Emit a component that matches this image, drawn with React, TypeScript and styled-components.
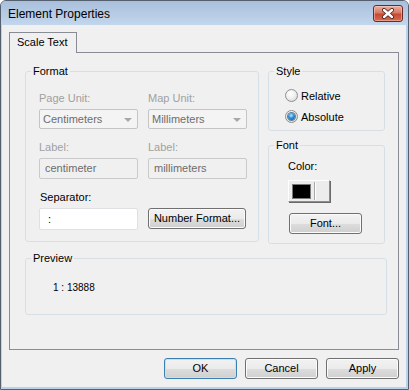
import React from "react";
import styled, { createGlobalStyle } from "styled-components";

const GlobalStyle = createGlobalStyle`
  html, body { margin: 0; padding: 0; background: #ffffff; }
  body {
    font-family: "Liberation Sans", Arial, sans-serif;
    font-size: 11px;
    color: #000;
  }
  * { box-sizing: border-box; }
`;

const Window = styled.div`
  width: 409px;
  height: 390px;
  border: 1px solid #55606f;
  border-radius: 6px 6px 0 0;
  background: #b9d1ea;
  display: flex;
  flex-direction: column;
  overflow: hidden;
`;

const TitleBar = styled.div`
  height: 24px;
  flex: none;
  display: flex;
  align-items: flex-start;
  justify-content: space-between;
  padding: 0 5px 0 7px;
  background: linear-gradient(#a9bfdb, #c2d6ec);
`;

const Title = styled.div`
  font-size: 12px;
  line-height: 14px;
  padding-top: 6px;
  color: #000;
`;

const CloseButton = styled.div`
  margin-top: 4px;
  width: 30px;
  height: 17px;
  border: 1px solid #6d2a22;
  border-radius: 3px;
  background: linear-gradient(#eab0a2 0%, #d97862 45%, #c54a32 55%, #d56c52 100%);
  box-shadow: inset 0 0 0 1px rgba(255, 220, 210, 0.45);
  display: flex;
  align-items: center;
  justify-content: center;
`;

const Client = styled.div`
  flex: 1;
  margin: 0 2px 2px 1px;
  background: #f0f0f0;
  padding: 7px 7px 0 7px;
  display: flex;
  flex-direction: column;
`;

const TabStrip = styled.div`
  display: flex;
  flex: none;
  height: 21px;
  margin-bottom: -1px;
  position: relative;
  z-index: 1;
`;

const Tab = styled.div`
  width: 68px;
  height: 21px;
  border: 1px solid #898c95;
  border-bottom: none;
  background: #f0f0f0;
  padding-left: 7px;
  line-height: 18px;
`;

const Panel = styled.div`
  flex: 1;
  border: 1px solid #898c95;
  background: #f0f0f0;
  padding: 12px 0 0 15px;
  display: flex;
  flex-direction: column;
`;

const TopRow = styled.div`
  display: flex;
  align-items: flex-start;
  gap: 9px;
`;

const RightColumn = styled.div`
  display: flex;
  flex-direction: column;
  gap: 8px;
`;

const Group = styled.fieldset<{ $w: number }>`
  margin: 0;
  min-width: 0;
  width: ${(p) => p.$w}px;
  border: 1px solid #d5dfe5;
  border-radius: 3px;
  padding: 0 0 0 5px;
`;

const Legend = styled.legend`
  padding: 0 2px;
  line-height: 13px;
  font-size: 11px;
  color: #000;
`;

const FormatGrid = styled.div`
  display: grid;
  grid-template-columns: 99px 99px;
  column-gap: 10px;
  row-gap: 12px;
  padding: 14px 0 11px 8px;
`;

const Field = styled.div`
  display: flex;
  flex-direction: column;
  gap: 4px;
`;

const FieldLabel = styled.div<{ $disabled?: boolean }>`
  line-height: 13px;
  color: ${(p) => (p.$disabled ? "#a0a0a0" : "#000")};
  padding-left: ${(p) => (p.$disabled ? 0 : 1)}px;
`;

const Combo = styled.div`
  height: 20px;
  border: 1px solid #c5c5c5;
  border-radius: 2px;
  background: #f4f4f4;
  display: flex;
  align-items: center;
  justify-content: space-between;
  padding: 0 5px 0 3px;
  color: #6d6d6d;
`;

const ComboArrow = styled.span`
  width: 0;
  height: 0;
  border-left: 4px solid transparent;
  border-right: 4px solid transparent;
  border-top: 4px solid #a8a8a8;
  margin-top: 1px;
`;

const TextBox = styled.div<{ $enabled?: boolean }>`
  height: ${(p) => (p.$enabled ? 22 : 21)}px;
  border: 1px solid ${(p) => (p.$enabled ? "#e0e0e4" : "#cacaca")};
  border-radius: 2px;
  background: ${(p) => (p.$enabled ? "#ffffff" : "#f0f0f0")};
  padding-left: ${(p) => (p.$enabled ? 8 : 5)}px;
  line-height: ${(p) => (p.$enabled ? 20 : 19)}px;
  color: ${(p) => (p.$enabled ? "#000" : "#6d6d6d")};
`;

const PushButton = styled.div<{ $w: number; $default?: boolean }>`
  width: ${(p) => p.$w}px;
  height: 21px;
  flex: none;
  border: 1px solid ${(p) => (p.$default ? "#3c7fb1" : "#707070")};
  border-radius: 3px;
  background: linear-gradient(#f2f2f2 0%, #ebebeb 50%, #dddddd 51%, #cfcfcf 100%);
  box-shadow: inset 0 0 0 1px ${(p) => (p.$default ? "#bfe4f8" : "#fbfbfb")};
  display: flex;
  align-items: center;
  justify-content: center;
  line-height: 13px;
  color: #000;
`;

const FieldButton = styled(PushButton)`
  align-self: end;
  margin-bottom: 1px;
`;

const StyleBody = styled.div`
  padding: 7px 0 3px 11px;
`;

const RadioRow = styled.div`
  display: flex;
  align-items: center;
  gap: 3px;
  height: 21px;
`;

const Radio = styled.span`
  width: 13px;
  height: 13px;
  border-radius: 50%;
  border: 1px solid #8e8f8f;
  background: radial-gradient(circle at 40% 35%, #ffffff 0%, #f0f0f0 45%, #cfcfcf 100%);
  display: flex;
  align-items: center;
  justify-content: center;
  flex: none;
`;

const RadioDot = styled.span`
  width: 7px;
  height: 7px;
  border-radius: 50%;
  background: radial-gradient(circle at 45% 35%, #b6e6ff 0%, #2f8fd6 45%, #0b4580 100%);
  box-shadow: 0 0 0 1px #5d7f9c;
`;

const FontBody = styled.div`
  padding: 8px 0 9px 13px;
  display: flex;
  flex-direction: column;
  align-items: flex-start;
`;

const ColorButton = styled.div`
  width: 42px;
  height: 22px;
  margin: 7px 0 0 1px;
  border: 1px solid;
  border-color: #ffffff #8c8c8c #8c8c8c #ffffff;
  box-shadow: 1px 1px 0 #6a6a6a;
  background: #ececec;
  display: flex;
  align-items: center;
  padding-left: 3px;
`;

const Swatch = styled.span`
  width: 19px;
  height: 15px;
  background: #000;
  border: 1px solid #7a7a7a;
`;

const Divider = styled.span`
  width: 2px;
  height: 18px;
  margin-left: 3px;
  border-left: 1px solid #a8a8a8;
  border-right: 1px solid #ffffff;
`;

const FontButton = styled(PushButton)`
  margin: 11px 0 0 2px;
`;

const PreviewGroup = styled(Group)`
  margin-top: 8px;
`;

const PreviewBody = styled.div`
  padding: 16px 0 20px 22px;
  font-size: 10px;
  line-height: 13px;
`;

const ButtonRow = styled.div`
  flex: none;
  display: flex;
  justify-content: flex-end;
  gap: 8px;
  margin: 8px 0 8px 0;
`;

const CloseGlyph = () => (
  <svg width="14" height="11" viewBox="0 0 14 11">
    <path d="M3 2 L11 9 M11 2 L3 9" stroke="#4a1d18" strokeWidth="4" strokeLinecap="round" fill="none" />
    <path d="M3 2 L11 9 M11 2 L3 9" stroke="#ffffff" strokeWidth="2.4" strokeLinecap="round" fill="none" />
  </svg>
);

export default function App() {
  return (
    <>
      <GlobalStyle />
      <Window>
        <TitleBar>
          <Title>Element Properties</Title>
          <CloseButton>
            <CloseGlyph />
          </CloseButton>
        </TitleBar>
        <Client>
          <TabStrip>
            <Tab>Scale Text</Tab>
          </TabStrip>
          <Panel>
            <TopRow>
              <Group $w={234}>
                <Legend>Format</Legend>
                <FormatGrid>
                  <Field>
                    <FieldLabel $disabled>Page Unit:</FieldLabel>
                    <Combo>
                      <span>Centimeters</span>
                      <ComboArrow />
                    </Combo>
                  </Field>
                  <Field>
                    <FieldLabel $disabled>Map Unit:</FieldLabel>
                    <Combo>
                      <span>Millimeters</span>
                      <ComboArrow />
                    </Combo>
                  </Field>
                  <Field>
                    <FieldLabel $disabled>Label:</FieldLabel>
                    <TextBox>centimeter</TextBox>
                  </Field>
                  <Field>
                    <FieldLabel $disabled>Label:</FieldLabel>
                    <TextBox>millimeters</TextBox>
                  </Field>
                  <Field>
                    <FieldLabel>Separator:</FieldLabel>
                    <TextBox $enabled>:</TextBox>
                  </Field>
                  <FieldButton $w={98}>Number Format...</FieldButton>
                </FormatGrid>
              </Group>
              <RightColumn>
                <Group $w={117}>
                  <Legend>Style</Legend>
                  <StyleBody>
                    <RadioRow>
                      <Radio />
                      <span>Relative</span>
                    </RadioRow>
                    <RadioRow>
                      <Radio>
                        <RadioDot />
                      </Radio>
                      <span>Absolute</span>
                    </RadioRow>
                  </StyleBody>
                </Group>
                <Group $w={117}>
                  <Legend>Font</Legend>
                  <FontBody>
                    <FieldLabel>Color:</FieldLabel>
                    <ColorButton>
                      <Swatch />
                      <Divider />
                    </ColorButton>
                    <FontButton $w={73}>Font...</FontButton>
                  </FontBody>
                </Group>
              </RightColumn>
            </TopRow>
            <PreviewGroup $w={362}>
              <Legend>Preview</Legend>
              <PreviewBody>1 : 13888</PreviewBody>
            </PreviewGroup>
          </Panel>
          <ButtonRow>
            <PushButton $w={73} $default>
              OK
            </PushButton>
            <PushButton $w={73}>Cancel</PushButton>
            <PushButton $w={73}>Apply</PushButton>
          </ButtonRow>
        </Client>
      </Window>
    </>
  );
}
